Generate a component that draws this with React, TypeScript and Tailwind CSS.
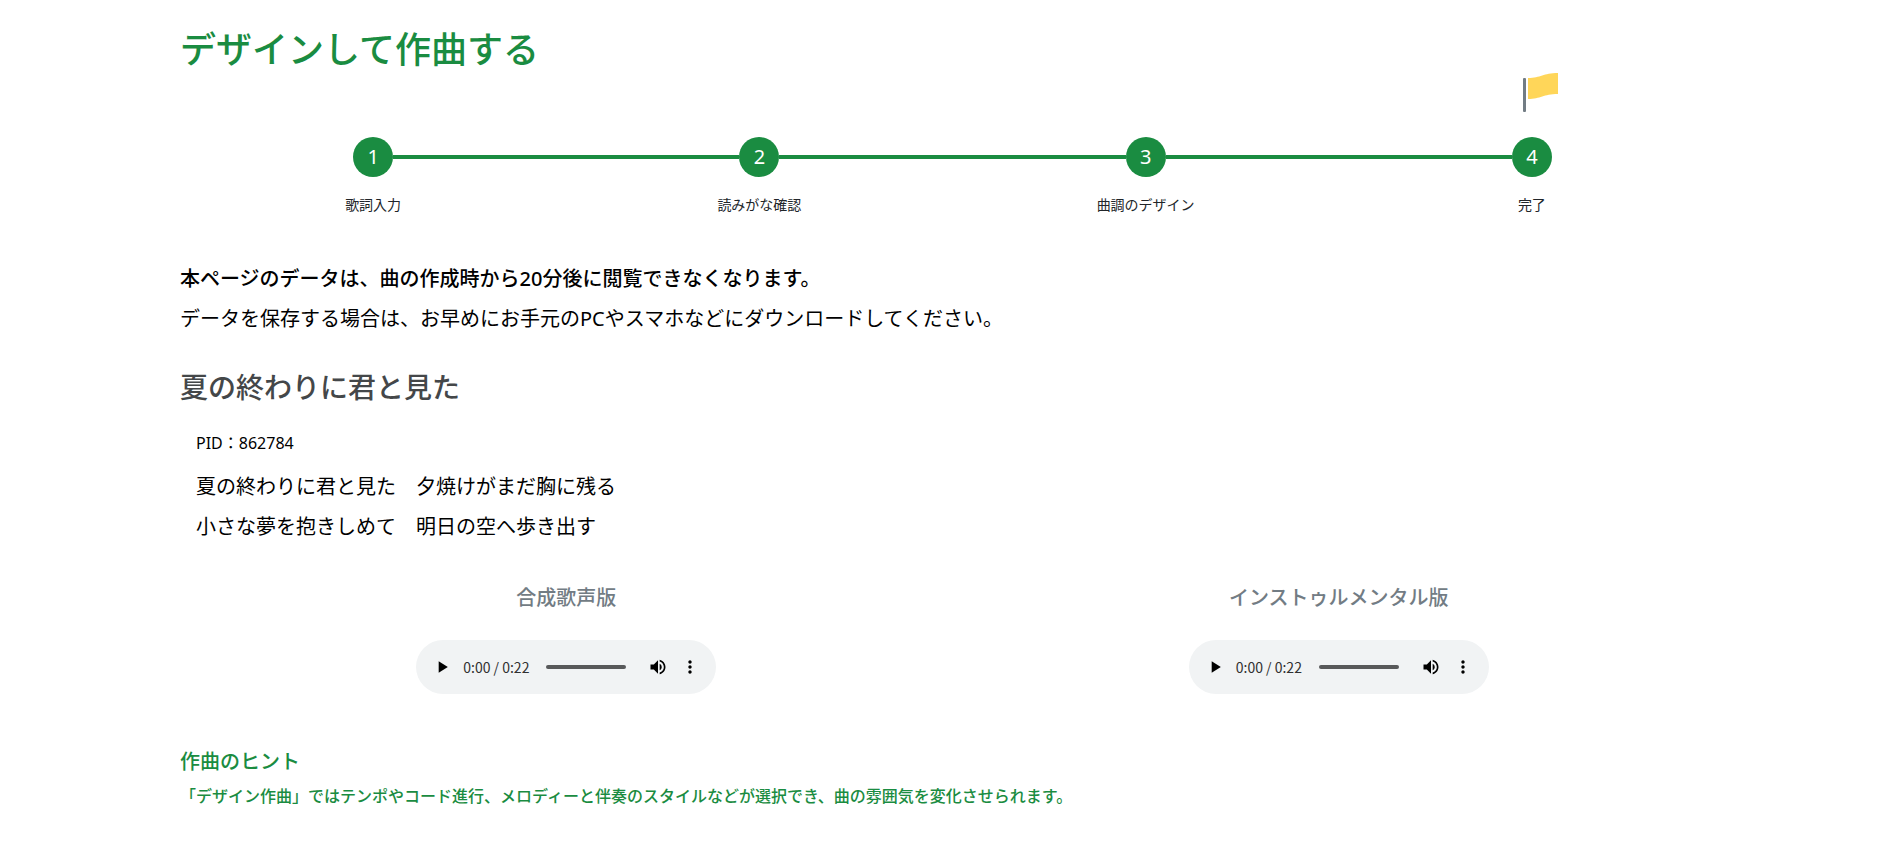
import clsx from "clsx";
import { MdMoreVert, MdPlayArrow, MdVolumeUp } from "react-icons/md";

const steps = ["歌詞入力", "読みがな確認", "曲調のデザイン", "完了"];

const tracks = [
  { id: "vocal", title: "合成歌声版" },
  { id: "instrumental", title: "インストゥルメンタル版" },
];

const Flag = () => {
  return (
    <svg
      className="absolute bottom-full left-1/2 mb-6 -ml-3 h-10 w-[38px]"
      viewBox="0 0 38 40"
      aria-hidden="true"
    >
      <rect x="3" y="5" width="3" height="34" rx="1" fill="#727c84" />
      <path
        d="M8 5C21 5 23 0 38 0V21C23 21 21 26 8 26Z"
        fill="#ffd659"
      />
    </svg>
  );
};

const Steps = () => {
  return (
    <ol className="mt-[63px] grid grid-cols-4">
      {steps.map((label, i) => (
        <li key={label}>
          <div className="grid grid-cols-[1fr_auto_1fr] items-center">
            <div className={clsx("h-1", i > 0 && "bg-[#1a8c41]")}></div>
            <div className="relative flex size-10 items-center justify-center rounded-full bg-[#1a8c41] text-xl text-white">
              {i + 1}
              {i === steps.length - 1 && <Flag />}
            </div>
            <div
              className={clsx("h-1", i < steps.length - 1 && "bg-[#1a8c41]")}
            ></div>
          </div>
          <p className="mt-4 text-center text-sm leading-6 text-[#212529]">
            {label}
          </p>
        </li>
      ))}
    </ol>
  );
};

const Player = ({ label }: { label: string }) => {
  return (
    <div
      role="group"
      aria-label={label}
      className="flex h-[54px] w-[300px] items-center rounded-full bg-[#f1f3f4] px-4 font-['Noto_Sans_CJK_JP',sans-serif] text-black"
    >
      <button aria-label="再生" className="text-xl">
        <MdPlayArrow />
      </button>
      <span className="ml-[11px] w-[67px] text-sm whitespace-nowrap text-[#303030]">
        0:00 / 0:22
      </span>
      <input
        type="range"
        aria-label="再生位置"
        min={0}
        max={22}
        defaultValue={0}
        className="ml-4 h-1 w-20 appearance-none rounded-full bg-[#58595a] [&::-webkit-slider-thumb]:appearance-none"
      />
      <button aria-label="ミュート" className="ml-auto text-xl">
        <MdVolumeUp />
      </button>
      <button aria-label="その他" className="ml-3 text-xl">
        <MdMoreVert />
      </button>
    </div>
  );
};

export default function App() {
  return (
    <main
      lang="ja"
      className="pt-[26px] pr-40 pb-12 pl-45 font-['Noto_Sans','Noto_Sans_CJK_JP',sans-serif] text-black"
    >
      <h1 className="text-4xl leading-12 font-medium text-[#1a8c41]">
        デザインして作曲する
      </h1>

      <Steps />

      <div className="mt-[42px] text-xl leading-10">
        <p className="font-medium">
          本ページのデータは、曲の作成時から20分後に閲覧できなくなります。
        </p>
        <p>
          データを保存する場合は、お早めにお手元のPCやスマホなどにダウンロードしてください。
        </p>
      </div>

      <h2 className="mt-7 text-[28px] leading-10 font-medium text-[#444749]">
        夏の終わりに君と見た
      </h2>

      <div className="mt-5 pl-4">
        <p className="text-base leading-8">PID：862784</p>
        <p className="mt-2 text-xl leading-10">
          夏の終わりに君と見た　夕焼けがまだ胸に残る
          <br />
          小さな夢を抱きしめて　明日の空へ歩き出す
        </p>
      </div>

      <div className="mt-[35px] grid grid-cols-2">
        {tracks.map((track) => (
          <section key={track.id} className="flex flex-col items-center">
            <h3 className="text-xl leading-8 font-medium text-[#727c84]">
              {track.title}
            </h3>
            <div className="mt-[26px]">
              <Player label={track.title} />
            </div>
          </section>
        ))}
      </div>

      <section className="mt-13 font-medium text-[#1a8c41]">
        <h3 className="text-xl leading-8">作曲のヒント</h3>
        <p className="mt-0.5 text-base leading-8">
          「デザイン作曲」ではテンポやコード進行、メロディーと伴奏のスタイルなどが選択でき、曲の雰囲気を変化させられます。
        </p>
      </section>
    </main>
  );
}
